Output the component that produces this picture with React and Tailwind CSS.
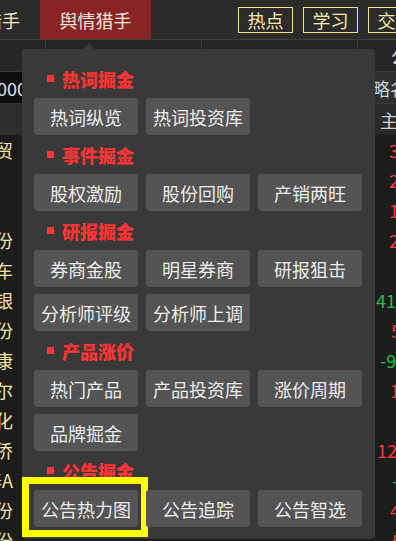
import React from 'react'

const sections = [
  { title: '热词掘金', rows: [['热词纵览', '热词投资库']] },
  { title: '事件掘金', rows: [['股权激励', '股份回购', '产销两旺']] },
  { title: '研报掘金', rows: [['券商金股', '明星券商', '研报狙击'], ['分析师评级', '分析师上调']] },
  { title: '产品涨价', rows: [['热门产品', '产品投资库', '涨价周期'], ['品牌掘金']] },
  { title: '公告掘金', rows: [['公告热力图', '公告追踪', '公告智选']] },
]

// 左侧被遮住的股票名，只露出最后一个字
const leftNames = ['商贸', '', '', '股份', '汽车', '白银', '股份', '健康', '米尔', '石化', '华侨', '国泰A', '股份', '股份']

// 右侧涨跌数值
const rightVals = [
  { t: '3.12', c: 'text-[#ff3b30]', pl: 'pl-[14px]' },
  { t: '2.05', c: 'text-[#ff3b30]', pl: 'pl-[14px]' },
  { t: '1.88', c: 'text-[#ff3b30]', pl: 'pl-[14px]' },
  { t: '2.40', c: 'text-[#ff3b30]', pl: 'pl-[14px]' },
  { t: '', c: '', pl: '' },
  { t: '41.2', c: 'text-[#1fc14a]', pl: 'pl-[1px]' },
  { t: '5.61', c: 'text-[#ff3b30]', pl: 'pl-[16px]' },
  { t: '-9.3', c: 'text-[#1fc14a]', pl: 'pl-[5px]' },
  { t: '1.07', c: 'text-[#ff3b30]', pl: 'pl-[15px]' },
  { t: '', c: '', pl: '' },
  { t: '12.8', c: 'text-[#ff3b30]', pl: 'pl-[2px]' },
  { t: '-0.2', c: 'text-[#1fc14a]', pl: 'pl-[17px]' },
  { t: '4.33', c: 'text-[#ff3b30]', pl: 'pl-[15px]' },
  { t: '5.90', c: 'text-[#ff3b30]', pl: 'pl-[17px]' },
]

const Btn = ({ label, highlight }) => (
  <div className="relative">
    <div className="flex h-[37px] items-center justify-center rounded-[3px] bg-[#545454] text-[18px] leading-none text-[#ececec]">
      {label}
    </div>
    {highlight && (
      <div className="pointer-events-none absolute -left-[12px] -top-[13px] h-[60px] w-[126px] border-[7px] border-[#ffff00]"></div>
    )}
  </div>
)

const App = () => {
  return (
    <div className="relative h-[541px] w-[396px] overflow-hidden bg-[#1c1c1c] font-['Noto_Sans_CJK_SC','Noto_Sans',sans-serif]">
      {/* 顶部导航 */}
      <div className="flex h-[40px] border-b border-[#404040] bg-[#2b2b2b]">
        <div className="flex w-[40px] shrink-0 items-center justify-end overflow-hidden whitespace-nowrap pr-[20px] text-[18px] leading-none text-[#f2ebcf]">
          猎手
        </div>
        <div className="flex w-[111px] shrink-0 items-center justify-center bg-[#882424] text-[18px] leading-none text-[#f3e6dc]">
          舆情猎手
        </div>
        <div className="ml-[87px] flex shrink-0 gap-[10px] pt-[7px]">
          {['热点', '学习', '交易'].map((t) => (
            <div
              key={t}
              className="flex h-[26px] w-[55px] shrink-0 items-center justify-center border border-[#f1e38e] text-[18px] leading-none text-[#f6eaa8]"
            >
              {t}
            </div>
          ))}
        </div>
      </div>

      {/* 第二行标签栏 */}
      <div className="flex h-[32px] border-b border-[#3a3a3a] bg-[#262626]">
        <div className="w-[46px] shrink-0 border-r border-[#3a3a3a]"></div>
        <div className="w-[156px] shrink-0 border-r border-[#3a3a3a]"></div>
        <div className="w-[156px] shrink-0 border-r border-[#3a3a3a]"></div>
        <div className="flex flex-1 items-center overflow-hidden whitespace-nowrap pl-[33px] text-[18px] leading-none text-[#e6ecf6]">
          公告
        </div>
      </div>

      {/* 表格主体 */}
      <div className="flex">
        {/* 左列 */}
        <div className="flex w-[22px] shrink-0 flex-col">
          <div className="flex h-[31px] items-center overflow-hidden whitespace-nowrap bg-[#0e0e0e] text-[18px] leading-none text-[#dfe8ff]">
            <span className="-ml-[3px]">0000</span>
          </div>
          <div className="h-[32px] bg-[#2e2e2e]"></div>
          {leftNames.map((n, i) => (
            <div
              key={i}
              className="flex h-[30px] items-center justify-end overflow-hidden whitespace-nowrap pr-[9px] text-[18px] leading-none text-[#f3e6a4]"
            >
              {n}
            </div>
          ))}
        </div>

        <div className="flex-1"></div>

        {/* 右列 */}
        <div className="flex w-[21px] shrink-0 flex-col">
          <div className="flex h-[31px] items-center overflow-hidden whitespace-nowrap bg-[#303030] text-[18px] leading-none text-[#c9cfd8]">
            <span className="-ml-[3px]">略名</span>
          </div>
          <div className="flex h-[32px] items-center overflow-hidden whitespace-nowrap border-t border-[#3c3c3c] bg-[#2a2a2a] pl-[5px] text-[18px] leading-none text-[#c9cfd8]">
            主力
          </div>
          {rightVals.map((v, i) => (
            <div
              key={i}
              className={`flex h-[30px] items-center overflow-hidden whitespace-nowrap text-[18px] leading-none ${v.c} ${v.pl}`}
            >
              {v.t}
            </div>
          ))}
        </div>
      </div>

      {/* 下拉菜单 */}
      <div className="absolute left-[22px] top-[49px] w-[353px] rounded-[4px] bg-[#393939] px-[12px] pb-[12px] pt-[10px]">
        <div className="absolute -top-[6px] left-[62px] h-0 w-0 border-b-[6px] border-l-[5px] border-r-[5px] border-b-[#393939] border-l-transparent border-r-transparent"></div>
        {sections.map((s, si) => (
          <div key={s.title}>
            <div className="flex h-[39px] items-center gap-[8px] pl-[13px]">
              <span className="h-[7px] w-[7px] bg-[#ff3535]"></span>
              <span className="text-[18px] font-black leading-none text-[#ff3535]">{s.title}</span>
            </div>
            <div className="flex flex-col gap-[7px]">
              {s.rows.map((row, ri) => (
                <div key={ri} className="grid grid-cols-[104px_104px_104px] gap-x-[8px]">
                  {row.map((b, bi) => (
                    <Btn key={b} label={b} highlight={si === sections.length - 1 && bi === 0} />
                  ))}
                </div>
              ))}
            </div>
          </div>
        ))}
      </div>
    </div>
  )
}

export default App
